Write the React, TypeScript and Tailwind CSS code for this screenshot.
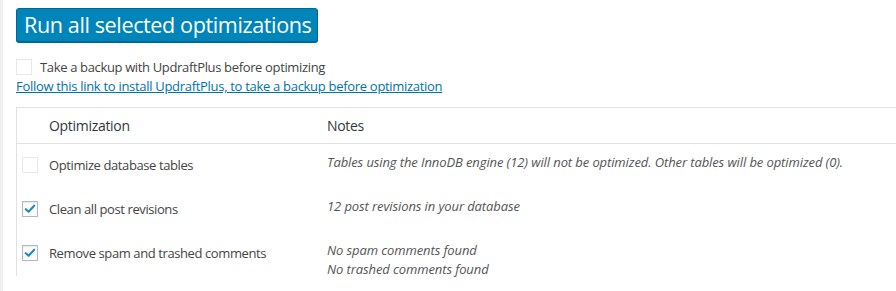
import React from 'react';

type Row = {
    label: string;
    checked: boolean;
    disabled?: boolean;
    notes: string[];
};

const rows: Row[] = [
    {
        label: 'Optimize database tables',
        checked: false,
        disabled: true,
        notes: ['Tables using the InnoDB engine (12) will not be optimized. Other tables will be optimized (0).'],
    },
    {
        label: 'Clean all post revisions',
        checked: true,
        notes: ['12 post revisions in your database'],
    },
    {
        label: 'Remove spam and trashed comments',
        checked: true,
        notes: ['No spam comments found', 'No trashed comments found'],
    },
];

function Checkbox({ checked, disabled }: { checked: boolean; disabled?: boolean }) {
    return (
        <span
            className={
                disabled
                    ? 'flex h-4 w-4 flex-shrink-0 items-center justify-center border border-[#e8e8e8] bg-white'
                    : 'flex h-4 w-4 flex-shrink-0 items-center justify-center border border-[#b4b9be] bg-white shadow-[inset_0_1px_2px_rgba(0,0,0,0.1)]'
            }
        >
            {checked && (
                <svg viewBox="0 0 16 16" className="h-[14px] w-[14px]" fill="none">
                    <path d="M3.2 8.2 6.4 11.2 12.8 4.2" stroke="#1e8cbe" strokeWidth={2.4} strokeLinecap="round" strokeLinejoin="round" />
                </svg>
            )}
        </span>
    );
}

export default function App() {
    return (
        <div className="flex h-[291px] w-[896px] overflow-hidden bg-white font-['Open_Sans',sans-serif] text-[#444]">
            <div className="w-[3px] flex-shrink-0 bg-[#f1f1f1]" />
            <div className="flex flex-col pl-[13px] pt-[8px]">
                <button className="h-[34px] w-[302px] whitespace-nowrap rounded-[3px] border border-[#006799] bg-[#0085ba] pl-[7px] text-left text-[21.6px] leading-none tracking-[-0.4px] text-white shadow-[0_1px_0_#006799]">
                    Run all selected optimizations
                </button>

                <label className="mt-[16px] flex items-center gap-[8px] text-[13px] leading-[18px]">
                    <Checkbox checked={false} disabled />
                    <span className="tracking-[-0.35px]">Take a backup with UpdraftPlus before optimizing</span>
                </label>
                <a href="#" className="mt-[1px] text-[13px] leading-[18px] tracking-[-0.3px] text-[#0073aa] underline">
                    Follow this link to install UpdraftPlus, to take a backup before optimization
                </a>

                <div className="mt-[12px] w-[1000px] border-l border-t border-[#e1e1e1]">
                    <div className="flex h-[36px] items-center border-b border-[#e1e1e1] text-[14px] tracking-[-0.3px] text-[#32373c]">
                        <div className="w-[310px] pl-[32px]">Optimization</div>
                        <div>Notes</div>
                    </div>
                    {rows.map((row) => (
                        <div key={row.label} className="flex h-[44px] pt-[12px] text-[13px]">
                            <div className="flex w-[310px] items-start gap-[11px] pl-[5px]">
                                <span className="pt-[1px]">
                                    <Checkbox checked={row.checked} disabled={row.disabled} />
                                </span>
                                <span className="tracking-[-0.4px]">{row.label}</span>
                            </div>
                            <div className="-mt-[3px] flex flex-col text-[13px] italic leading-[19px] tracking-[-0.1px] text-[#555]">
                                {row.notes.map((n) => (
                                    <span key={n}>{n}</span>
                                ))}
                            </div>
                        </div>
                    ))}
                </div>
            </div>
        </div>
    );
}
